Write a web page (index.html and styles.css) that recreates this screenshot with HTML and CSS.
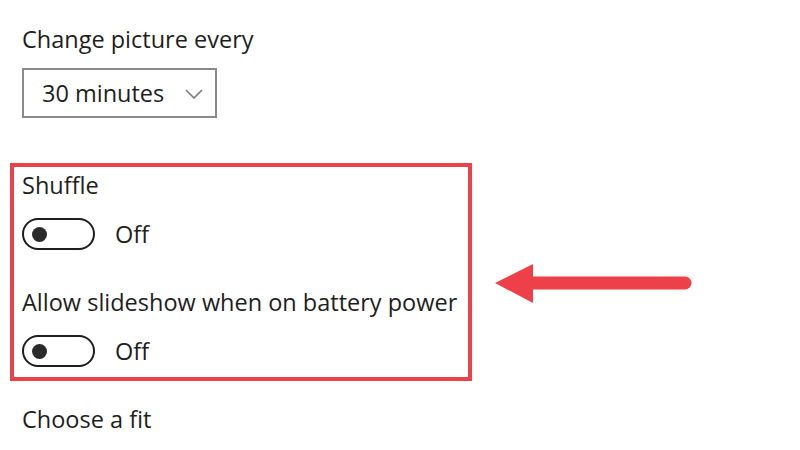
FILE: index.html
```html
<html>
    <head>
        <link rel="stylesheet" href="styles.css">
    </head>
    <body>
        <div class="page">
            <div class="label">Change picture every</div>
            <div class="select">
                <span>30 minutes</span>
                <svg class="chevron" width="18" height="10" viewBox="0 0 18 10">
                    <path d="M1 1 L9 9 L17 1" fill="none" stroke="#7a7a7a" stroke-width="1.6"/>
                </svg>
            </div>
            <div class="callout">
                <div class="highlight">
                    <div class="label">Shuffle</div>
                    <div class="toggle-row">
                        <span class="toggle"><span class="knob"></span></span>
                        <span>Off</span>
                    </div>
                    <div class="label spaced">Allow slideshow when on battery power</div>
                    <div class="toggle-row">
                        <span class="toggle"><span class="knob"></span></span>
                        <span>Off</span>
                    </div>
                </div>
                <svg class="arrow" width="210" height="42" viewBox="0 0 210 42">
                    <path d="M5 21 L43 2 L43 41 Z" fill="#ee4048"/>
                    <line x1="40" y1="21" x2="195" y2="21" stroke="#ee4048" stroke-width="13" stroke-linecap="round"/>
                </svg>
            </div>
            <div class="label fit">Choose a fit</div>
        </div>
    </body>
</html>
```

FILE: styles.css
```css
body{
    margin: 0;
    background: #ffffff;
    font-family: 'Open Sans', sans-serif;
    color: #1e1e1e;
}
.page{
    padding: 24px 0 0 22px;
}
.label{
    font-size: 23.5px;
    line-height: 30px;
    height: 30px;
    white-space: nowrap;
}
.select{
    box-sizing: border-box;
    width: 195px;
    height: 50px;
    margin-top: 14px;
    border: 2px solid #8a8a8a;
    display: flex;
    align-items: center;
    padding-left: 18px;
    font-size: 23.5px;
}
.chevron{
    margin-left: 21px;
    margin-top: 2px;
}
.callout{
    display: flex;
    margin-top: 45px;
    margin-left: -12px;
}
.highlight{
    box-sizing: border-box;
    width: 462px;
    border: 4px solid #e8434b;
    padding: 3px 0 10px 8px;
}
.toggle-row{
    display: flex;
    align-items: center;
    margin-top: 18px;
    font-size: 23.5px;
    height: 32px;
}
.toggle{
    box-sizing: border-box;
    width: 73px;
    height: 32px;
    border: 2.5px solid #1e1e1e;
    border-radius: 16px;
    display: flex;
    align-items: center;
    padding-left: 8px;
    margin-right: 20px;
}
.knob{
    width: 15px;
    height: 15px;
    border-radius: 50%;
    background: #2a2a2a;
}
.spaced{
    margin-top: 37px;
}
.arrow{
    margin-left: 18px;
    margin-top: 99px;
}
.fit{
    margin-top: 23px;
}
```
